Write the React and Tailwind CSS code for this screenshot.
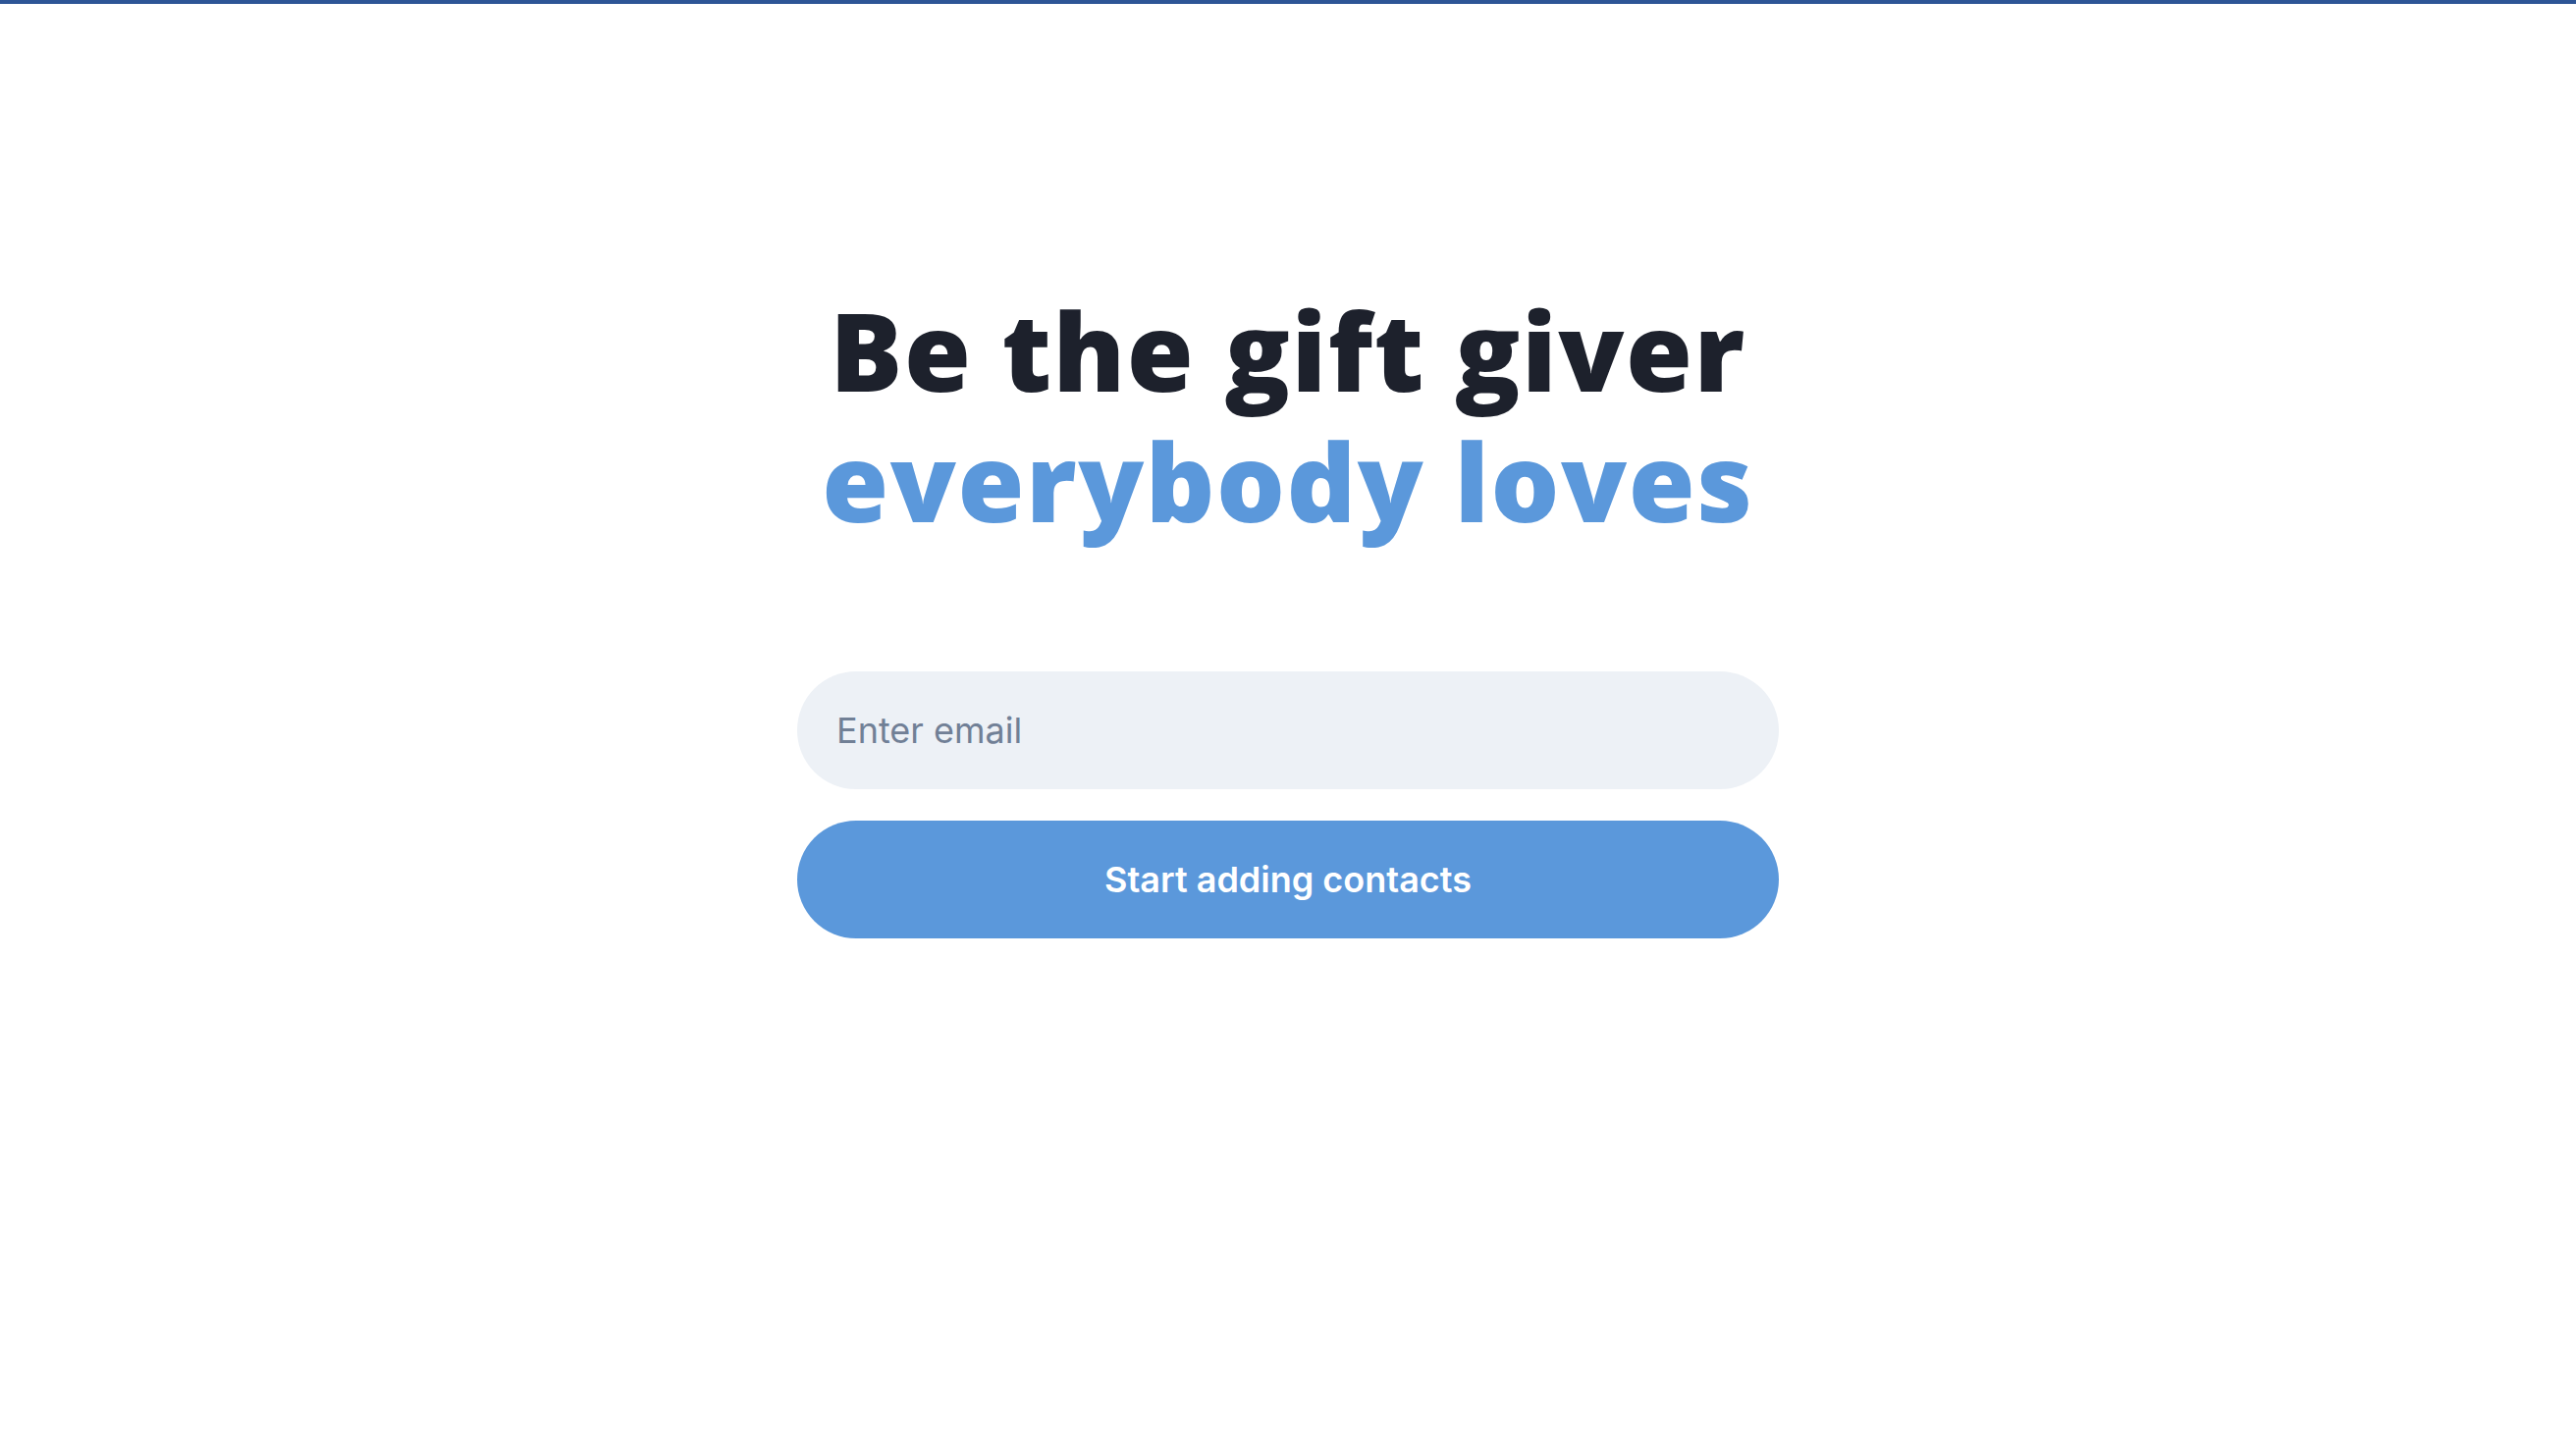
export default function App() {
  return (
    <div className="min-h-[1466px] w-full bg-white" style={{ fontFamily: "Inter, 'Noto Sans', sans-serif" }}>
      <div className="h-[4px] w-full bg-[#2d5596]" />
      <div className="flex flex-col items-center pt-[286px]">
        <h1
          className="text-center text-[110px] font-extrabold leading-[133px] tracking-[1.5px]"
          style={{ fontFamily: "'Open Sans', 'Noto Sans', sans-serif" }}
        >
          <span className="block text-[#1d212c]">Be the gift giver</span>
          <span className="block text-[#5b98db]">everybody loves</span>
        </h1>
        <div className="mt-[128px] flex w-[1000px] flex-col gap-[32px]">
          <input
            type="email"
            placeholder="Enter email"
            className="h-[120px] w-full rounded-full bg-[#edf1f6] px-[40px] text-[36px] text-[#1d212c] outline-none placeholder:text-[#718096]"
          />
          <button className="h-[120px] w-full rounded-full bg-[#5b98db] text-[36px] font-semibold text-white">
            Start adding contacts
          </button>
        </div>
      </div>
    </div>
  );
}
